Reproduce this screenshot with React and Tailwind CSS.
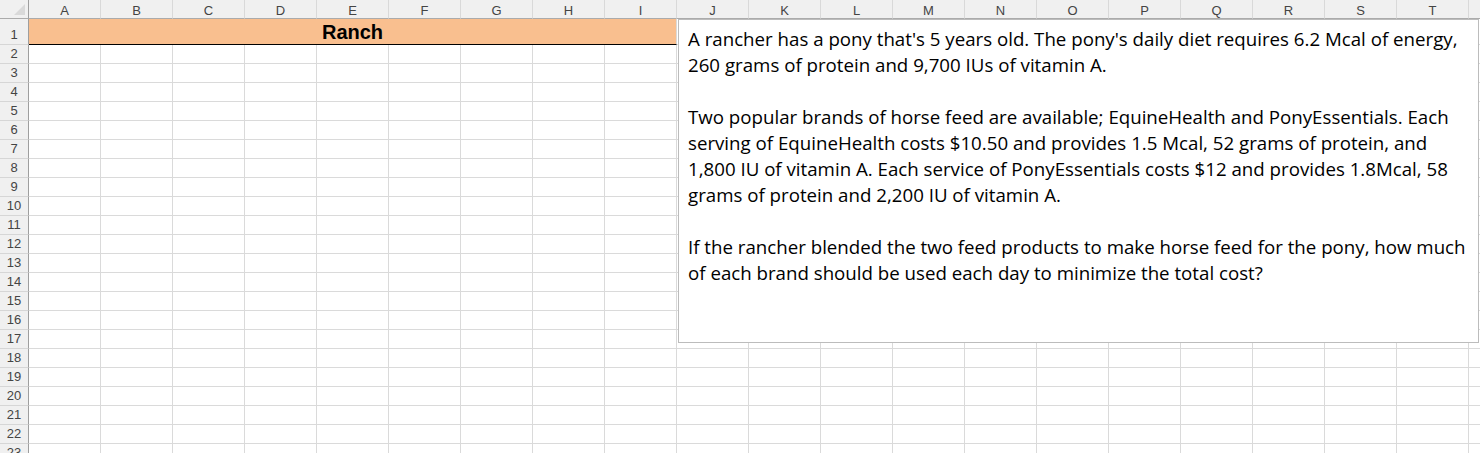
import React from 'react';

const COLS = ['A', 'B', 'C', 'D', 'E', 'F', 'G', 'H', 'I', 'J', 'K', 'L', 'M', 'N', 'O', 'P', 'Q', 'R', 'S', 'T', 'U'];
const ROWS = Array.from({ length: 22 }, (_, i) => i + 2);

const LINES = [
  "A rancher has a pony that's 5 years old. The pony's daily diet requires 6.2 Mcal of energy,",
  '260 grams of protein and 9,700 IUs of vitamin A.',
  '',
  'Two popular brands of horse feed are available; EquineHealth and PonyEssentials. Each',
  'serving of EquineHealth costs $10.50 and provides 1.5 Mcal, 52 grams of protein, and',
  '1,800 IU of vitamin A. Each service of PonyEssentials costs $12 and provides 1.8Mcal, 58',
  'grams of protein and 2,200 IU of vitamin A.',
  '',
  'If the rancher blended the two feed products to make horse feed for the pony, how much',
  'of each brand should be used each day to minimize the total cost?',
];

function RowHead({ n, tall }) {
  return (
    <div
      className={`bg-[#f0f0f0] border-r border-r-[#9e9e9e] border-b border-b-[#d6d6d6] flex items-end justify-center text-[13px] leading-none text-[#444] pb-[3px] ${tall ? 'h-[26px]' : 'h-[19px]'}`}
    >
      {n}
    </div>
  );
}

function Cell() {
  return <div className="h-[19px] border-r border-b border-[#dadada] bg-white" />;
}

export default function App() {
  return (
    <div className="relative w-[1480px] h-[453px] overflow-hidden bg-white font-['Liberation_Sans',Arial,sans-serif]">
      <div className="grid grid-cols-[29px_repeat(21,72px)]">
        {/* corner */}
        <div className="h-[19px] bg-[#f0f0f0] border-r border-r-[#9e9e9e] border-b border-b-[#ababab] relative">
          <svg className="absolute left-[14px] top-[4px]" width="11" height="11" viewBox="0 0 11 11">
            <polygon points="11,0 11,11 0,11" fill="#d9d9d9" />
          </svg>
        </div>
        {COLS.map((c) => (
          <div
            key={c}
            className="h-[19px] bg-[#f0f0f0] border-r border-r-[#d9d9d9] border-b border-b-[#ababab] flex items-center justify-center text-[13px] leading-none text-[#444] pt-[2px]"
          >
            {c}
          </div>
        ))}

        {/* row 1 */}
        <RowHead n={1} tall />
        <div className="col-span-9 h-[26px] bg-[#f9bf8f] border-b border-b-black border-r border-r-[#dadada] flex items-center justify-center">
          <span className="text-[20px] font-bold leading-none text-black">Ranch</span>
        </div>
        {COLS.slice(9).map((c) => (
          <div key={c} className="h-[26px] border-r border-b border-[#dadada] bg-white" />
        ))}

        {ROWS.map((r) => (
          <React.Fragment key={r}>
            <RowHead n={r} />
            {COLS.map((c) => (
              <Cell key={c} />
            ))}
          </React.Fragment>
        ))}
      </div>

      {/* text box */}
      <div className="absolute left-[678px] top-[19px] w-[801px] h-[324px] border border-[#bcbcbc] bg-white pl-[9px] pt-[6px] font-['Open_Sans',sans-serif] text-[18.7px] leading-[26px] text-black">
        {LINES.map((l, i) => (
          <div key={i} className="h-[26px] whitespace-nowrap">
            {l}
          </div>
        ))}
      </div>
    </div>
  );
}
